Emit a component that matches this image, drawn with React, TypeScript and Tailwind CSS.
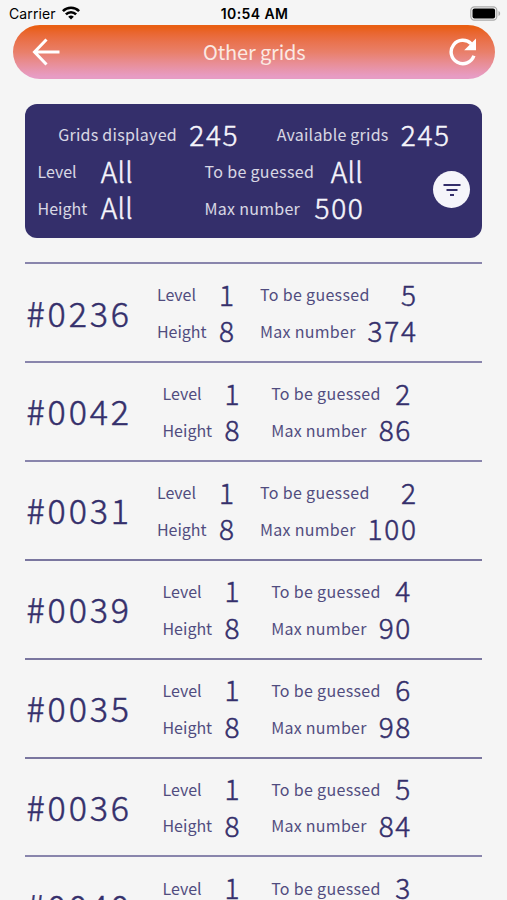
import React from "react";

const rows = [
  { id: "#0236", guessed: "5", max: "374", line: "h-[2px] bg-[#8985ac]" },
  { id: "#0042", guessed: "2", max: "86", line: "h-[2px] bg-[#8985ac]" },
  { id: "#0031", guessed: "2", max: "100", line: "h-[2px] bg-[#8985ac]" },
  { id: "#0039", guessed: "4", max: "90", line: "h-[2px] bg-[#7a769f]" },
  { id: "#0035", guessed: "6", max: "98", line: "h-[2px] bg-[#7a769f]" },
  { id: "#0036", guessed: "5", max: "84", line: "h-[2px] bg-[#7a769f]" },
  { id: "#0040", guessed: "3", max: "92", line: "h-[2px] bg-[#8985ac]" },
];

const labels: Record<string, string> = {
  Level: "w-[40px]",
  Height: "w-[50px]",
  "To be guessed": "w-[109px] tracking-[0.33px]",
  "Max number": "w-[95.5px] tracking-[0.28px]",
  "Grids displayed": "w-[119px] tracking-[0.25px]",
  "Available grids": "w-[112px] tracking-[0.22px]",
};

function Stat({ label, value }: { label: string; value: string }) {
  return (
    <div className="flex h-[36.7px] items-center justify-between gap-3">
      <span className={"shrink-0 text-[16px] leading-9 opacity-85 " + labels[label]}>{label}</span>
      <span
        className={
          "pb-px text-[28px] leading-9 font-light [-webkit-text-stroke:0.5px_currentColor] " +
          (value === "All" ? "tracking-[0.3px]" : "-mr-[1.5px] tracking-[1.7px]")
        }
      >
        {value}
      </span>
    </div>
  );
}

export default function App() {
  return (
    <div className="h-[900px] overflow-hidden bg-[#f5f5f5] whitespace-nowrap font-['Noto_Sans_CJK_JP',sans-serif]">
      <div className="grid h-[26px] grid-cols-3 items-center pr-[6px] pl-[9px] font-['Inter',sans-serif] text-black">
        <div className="flex items-center gap-[6px] text-[14px]">
          <span className="tracking-[0.1px]">Carrier</span>
          <svg width="18" height="14" viewBox="0 0 18 14" fill="none" stroke="#000" strokeWidth="2.6">
            <path d="M.9 5.1a11.5 11.5 0 0 1 16.2 0M3.9 8.3a7.2 7.2 0 0 1 10.2 0" />
            <path d="M9 13.6 6.2 10.8a4 4 0 0 1 5.6 0z" fill="#000" stroke="none" />
          </svg>
        </div>
        <div className="-ml-px text-center text-[14px] font-semibold tracking-[0.4px]">10:54 AM</div>
        <svg className="justify-self-end" width="31" height="15" viewBox="0 0 31 15">
          <rect x=".8" y=".8" width="26" height="13.4" rx="3.6" fill="#f5f5f5" stroke="#aaa" strokeWidth="1.2" />
          <rect x="2.5" y="2.5" width="22.6" height="10" rx="2" />
          <path d="M28.5 5c2.2.8 2.2 4.2 0 5z" fill="#aaa" />
        </svg>
      </div>

      <header className="mr-[12px] ml-[13px] -mt-px flex h-[54px] items-center justify-between rounded-full bg-linear-to-b from-[#e95f14] from-5% via-[#e97f69] via-50% to-[#e79cc4] to-95% pr-[18.5px] pl-[19px] text-[#fbe9e3]">
        <svg width="28" height="28" viewBox="0 0 28 28" fill="none" stroke="#fff" strokeWidth="3">
          <path d="M14.5 1.5 2.5 14l12 12.5M2.5 14H27.5" />
        </svg>
        <h1 className="text-[20px] leading-8 tracking-[-0.15px]">Other grids</h1>
        <svg width="28" height="28" viewBox="0 0 28 28">
          <path d="M24.9 17.8A11.7 11.7 0 1 1 22.3 5.9" fill="none" stroke="#fff" strokeWidth="3.4" />
          <path d="M27 .5V12.3H15.2z" fill="#fff" />
        </svg>
      </header>

      <section className="mx-[25px] mt-[24.5px] h-[134px] rounded-[12px] bg-[#342f6b] pr-[12px] pl-[12.5px] pt-[12.5px] text-[#f5f5fb]">
        <div className="flex justify-center gap-[39px]">
          <Stat label="Grids displayed" value="245" />
          <Stat label="Available grids" value="245" />
        </div>
        <div className="flex items-center">
          <div className="w-[95.5px]">
            <Stat label="Level" value="All" />
            <Stat label="Height" value="All" />
          </div>
          <div className="ml-[71.5px] w-[158.5px]">
            <Stat label="To be guessed" value="All" />
            <Stat label="Max number" value="500" />
          </div>
          <button className="mt-[1px] ml-auto flex size-[37px] items-center justify-center rounded-full bg-[#f5f5fa]">
            <svg width="18" height="12" viewBox="0 0 18 12" fill="#342f6b">
              <path d="M.5 0h17v2H.5zM3.5 5h11v2h-11zM7 10h4v2H7z" />
            </svg>
          </button>
        </div>
      </section>

      <main className="mx-[25px] mt-[24.6px] text-[#342f6b]">
        {rows.map((row) => (
          <article key={row.id} className="h-[98.9px]">
            <div className={row.line} />
            <div className="flex h-[97px] items-center">
              <h2 className="w-[106px] pl-[1.5px] text-[34px] leading-10 font-light tracking-[2.9px] [-webkit-text-stroke:0.5px_currentColor]">
                {row.id}
              </h2>
              <div className="flex w-[311px] justify-evenly">
                <div>
                  <Stat label="Level" value="1" />
                  <Stat label="Height" value="8" />
                </div>
                <div>
                  <Stat label="To be guessed" value={row.guessed} />
                  <Stat label="Max number" value={row.max} />
                </div>
              </div>
            </div>
          </article>
        ))}
      </main>
    </div>
  );
}
